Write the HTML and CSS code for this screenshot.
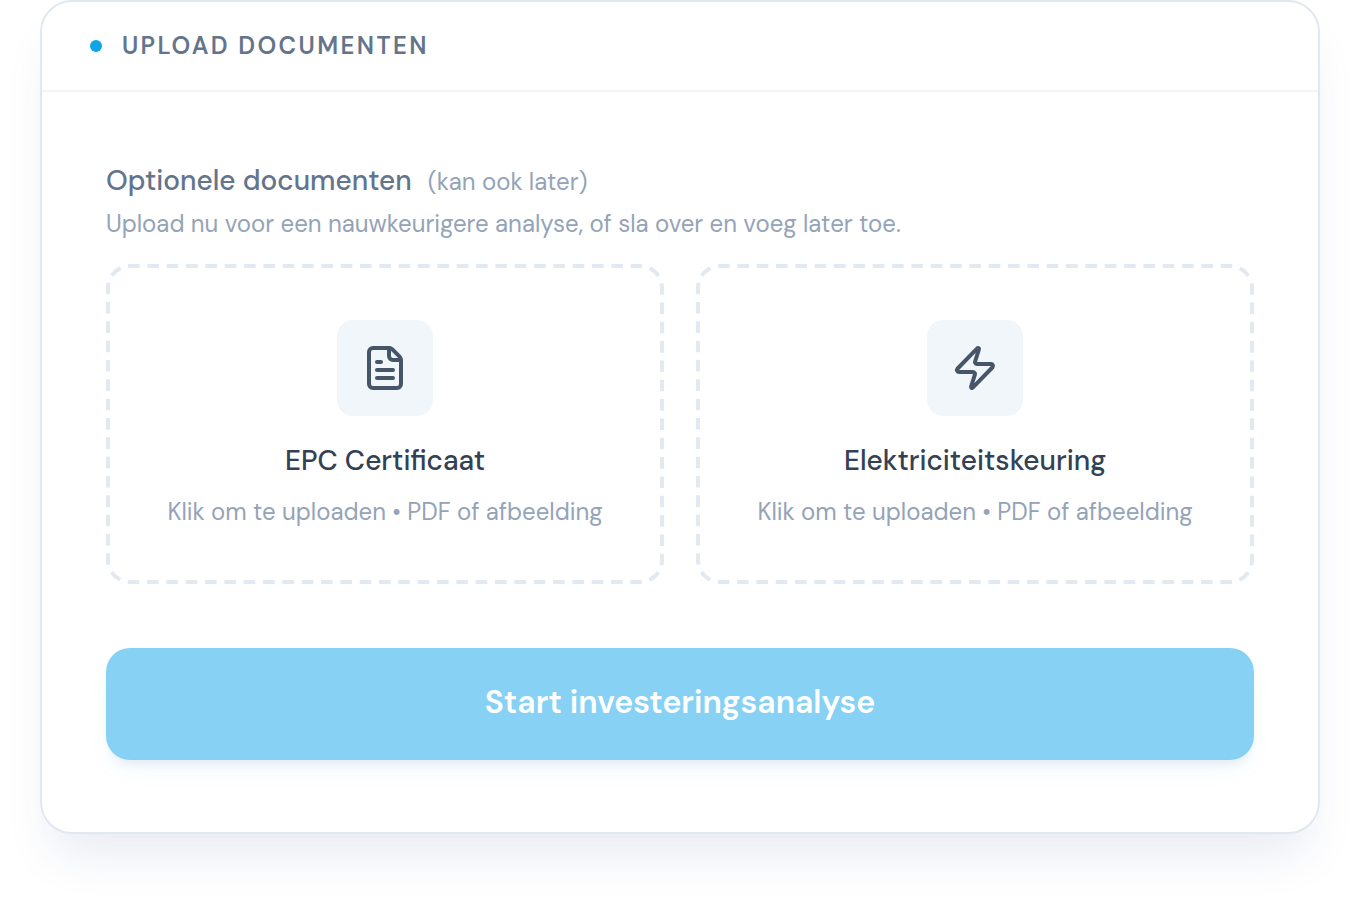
FILE: index.html
```html
<!DOCTYPE html>
<html lang="nl">
<head>
<meta charset="utf-8">
<meta name="viewport" content="width=device-width, initial-scale=1">
<title>Upload documenten</title>
<link rel="stylesheet" href="styles.css">
</head>
<body>
<main class="card">
  <header class="card-header">
    <span class="dot"></span>
    <h1 class="card-title">Upload documenten</h1>
  </header>
  <div class="card-body">
    <div class="intro">
      <h2 class="intro-title">Optionele documenten</h2>
      <span class="intro-note">(kan ook later)</span>
    </div>
    <p class="intro-text">Upload nu voor een nauwkeurigere analyse, of sla over en voeg later toe.</p>
    <div class="tiles">
      <button class="tile" type="button">
        <svg class="outline" aria-hidden="true"><rect class="outline-rect" pathLength="1760"/></svg>
        <span class="tile-icon">
          <svg class="icon" viewBox="0 0 24 24" aria-hidden="true">
            <path d="M6 22a2 2 0 0 1-2-2V4a2 2 0 0 1 2-2h8a2.4 2.4 0 0 1 1.704.706l3.588 3.588A2.4 2.4 0 0 1 20 8v12a2 2 0 0 1-2 2z"/>
            <path d="M14 2v4a2 2 0 0 0 2 2h4"/>
            <path d="M10 9H8"/>
            <path d="M16 13H8"/>
            <path d="M16 17H8"/>
          </svg>
        </span>
        <span class="tile-title">EPC Certificaat</span>
        <span class="tile-text">Klik om te uploaden • PDF of afbeelding</span>
      </button>
      <button class="tile" type="button">
        <svg class="outline" aria-hidden="true"><rect class="outline-rect" pathLength="1760"/></svg>
        <span class="tile-icon">
          <svg class="icon" viewBox="0 0 24 24" aria-hidden="true">
            <path d="M4 14a1 1 0 0 1-.78-1.63l9.9-10.2a.5.5 0 0 1 .86.46l-1.92 6.02A1 1 0 0 0 13 10h7a1 1 0 0 1 .78 1.63l-9.9 10.2a.5.5 0 0 1-.86-.46l1.92-6.02A1 1 0 0 0 11 14z"/>
          </svg>
        </span>
        <span class="tile-title">Elektriciteitskeuring</span>
        <span class="tile-text">Klik om te uploaden • PDF of afbeelding</span>
      </button>
    </div>
    <button class="submit" type="button">Start investeringsanalyse</button>
  </div>
</main>
</body>
</html>
```
FILE: styles.css
```css
* {
  box-sizing: border-box;
}

body {
  margin: 0;
  padding: 0 40px 80px;
  background: #fff;
  color: #64748b;
  font-family: "DM Sans", Roboto, "Liberation Sans", sans-serif;
}

h1, h2, p {
  margin: 0;
}

button {
  font: inherit;
  cursor: pointer;
}

.card {
  border: 2px solid #e2e8f0;
  border-radius: 32px;
  background: #fff;
  box-shadow: 0 32px 48px -12px rgba(30, 58, 138, 0.1);
}

.card-header {
  display: flex;
  align-items: center;
  gap: 20px;
  padding: 28px 48px;
  border-bottom: 2px solid #f1f5f9;
}

.dot {
  width: 12px;
  height: 12px;
  border-radius: 50%;
  background: #0ea5e9;
}

.card-title {
  font-size: 24px;
  line-height: 32px;
  font-weight: 600;
  letter-spacing: 0.1em;
  text-transform: uppercase;
}

.card-body {
  padding: 69px 64px 72px;
}

.intro {
  display: flex;
  align-items: baseline;
  gap: 16px;
}

.intro-title {
  font-size: 28px;
  line-height: 40px;
  font-weight: 500;
}

.intro-note {
  color: #94a3b8;
  font-size: 24px;
  line-height: 32px;
}

.intro-text {
  margin-top: 7px;
  color: #94a3b8;
  font-size: 24px;
  line-height: 32px;
}

.tiles {
  display: grid;
  grid-template-columns: 1fr 1fr;
  gap: 32px;
  margin-top: 24px;
}

.tile {
  position: relative;
  display: flex;
  flex-direction: column;
  align-items: center;
  padding: 56px 24px;
  border: 0;
  border-radius: 24px;
  background: none;
}

.outline {
  position: absolute;
  inset: 0;
  width: 100%;
  height: 100%;
}

.outline-rect {
  x: 2px;
  y: 2px;
  rx: 22px;
  width: calc(100% - 4px);
  height: calc(100% - 4px);
  fill: none;
  stroke: #e2e9f1;
  stroke-width: 4px;
  stroke-dasharray: 12 8;
  stroke-dashoffset: 2px;
}

.tile-icon {
  display: grid;
  place-items: center;
  width: 96px;
  height: 96px;
  border-radius: 16px;
  background: #f0f6fa;
}

.icon {
  width: 48px;
  height: 48px;
  fill: none;
  stroke: #475569;
  stroke-width: 2;
  stroke-linecap: round;
  stroke-linejoin: round;
}

.tile-title {
  margin-top: 25px;
  color: #334155;
  font-size: 28px;
  line-height: 40px;
  font-weight: 500;
}

.tile-text {
  margin-top: 15px;
  color: #94a3b8;
  font-size: 24px;
  line-height: 32px;
}

.submit {
  display: block;
  width: 100%;
  margin-top: 64px;
  padding: 30px 32px 34px;
  border: 0;
  border-radius: 24px;
  background: #87d2f4;
  color: #fff;
  font-size: 32px;
  line-height: 48px;
  font-weight: 600;
  box-shadow: 0 12px 24px -4px rgba(14, 165, 233, 0.06), 0 8px 12px -6px rgba(30, 41, 100, 0.1);
}
```
